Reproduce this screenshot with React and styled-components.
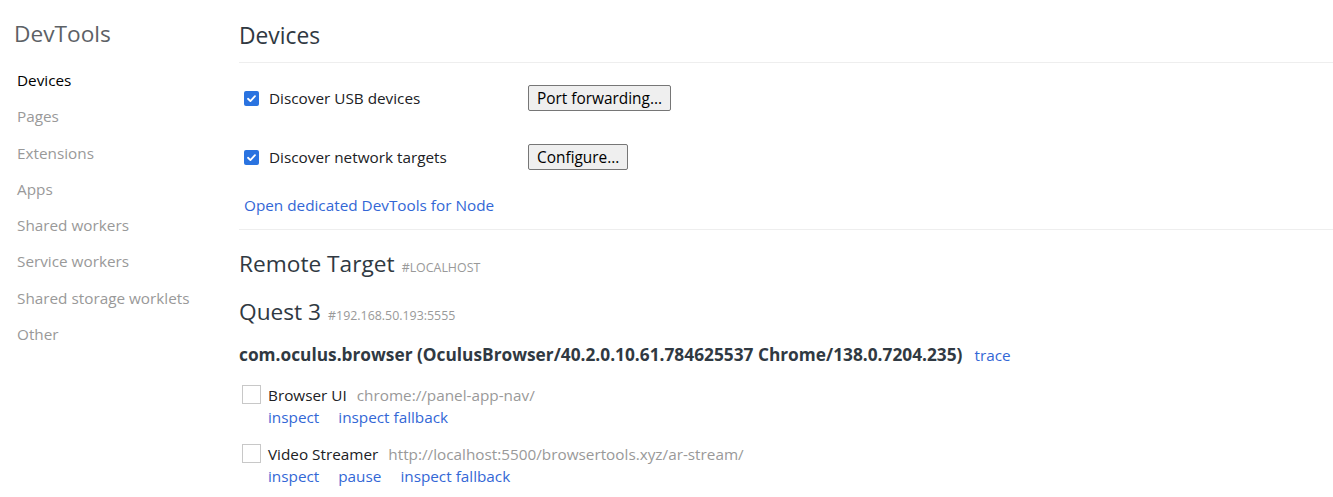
import React from "react";
import styled, { createGlobalStyle } from "styled-components";

const COLORS = {
  text: "#202124",
  heading: "#303942",
  title: "#5c6166",
  muted: "#999999",
  link: "#3367d6",
  rule: "#eeeeee",
  check: "#2a73e0",
};

const GlobalStyle = createGlobalStyle`
  html, body {
    margin: 0;
    padding: 0;
    background: #ffffff;
  }
  body {
    font-family: "Open Sans", "Noto Sans", sans-serif;
    font-size: 15.3px;
    color: ${COLORS.text};
  }
`;

const NAV = [
  "Devices",
  "Pages",
  "Extensions",
  "Apps",
  "Shared workers",
  "Service workers",
  "Shared storage worklets",
  "Other",
];

const Page = styled.div`
  display: flex;
  min-height: 497px;
`;

const Sidebar = styled.nav`
  width: 239px;
  flex: none;
  padding: 19px 0 0 14px;
  box-sizing: border-box;
`;

const SidebarTitle = styled.div`
  font-size: 22.7px;
  line-height: 30px;
  color: ${COLORS.title};
  margin-bottom: 21px;
`;

const NavItem = styled.div`
  height: 36.3px;
  line-height: 20px;
  padding-left: 3px;
  color: ${(p) => (p.$active ? "#000" : COLORS.muted)};
`;

const Main = styled.main`
  flex: 1;
  padding-top: 21px;
`;

const Header = styled.h1`
  margin: 0;
  font-size: 22.8px;
  font-weight: 400;
  line-height: 30px;
  color: ${COLORS.heading};
  padding-bottom: 11px;
  border-bottom: 1px solid ${COLORS.rule};
`;

const Settings = styled.div`
  padding: 22px 0 14px 5px;
  border-bottom: 1px solid ${COLORS.rule};
  display: flex;
  flex-direction: column;
  gap: 33px;
`;

const SettingRow = styled.div`
  display: flex;
  align-items: center;
  height: 26px;
`;

const CheckLabel = styled.label`
  display: flex;
  align-items: center;
  gap: 10px;
  width: 284px;
`;

const BlueBox = styled.span`
  width: 15px;
  height: 15px;
  border-radius: 2px;
  background: ${COLORS.check};
  display: flex;
  align-items: center;
  justify-content: center;
`;

const Button = styled.button`
  height: 26px;
  padding: 0 8px;
  font-family: inherit;
  font-size: 15.4px;
  color: #000;
  background: #efefef;
  border: 1px solid #767676;
  border-radius: 2px;
`;

const Link = styled.a`
  color: ${COLORS.link};
  text-decoration: none;
  cursor: pointer;
`;

const NodeLink = styled(Link)`
  display: block;
  line-height: 20px;
  margin-top: -8px;
`;

const Section = styled.section`
  padding-top: 19px;
`;

const SectionTitle = styled.h2`
  margin: 0 0 14px;
  font-size: 22.7px;
  font-weight: 400;
  line-height: 30px;
  color: ${COLORS.heading};
  display: flex;
  align-items: baseline;
  gap: 7px;
`;

const Tag = styled.span`
  font-size: 12.4px;
  color: ${COLORS.muted};
`;

const BrowserLine = styled.div`
  display: flex;
  align-items: baseline;
  gap: 12px;
  line-height: 20px;
  margin-top: 2px;
  margin-bottom: 20px;
`;

const BrowserName = styled.span`
  font-weight: 700;
  font-size: 17.3px;
  color: ${COLORS.heading};
`;

const TargetList = styled.div`
  display: flex;
  flex-direction: column;
  gap: 17px;
  padding-left: 3px;
`;

const Target = styled.div`
  display: grid;
  grid-template-columns: 19px 1fr;
  column-gap: 7px;
  align-items: start;
`;

const EmptyBox = styled.span`
  width: 19px;
  height: 19px;
  box-sizing: border-box;
  border: 1px solid #c8c8c8;
`;

const TargetTitle = styled.div`
  line-height: 20px;
  display: flex;
  gap: 10px;
`;

const Url = styled.span`
  color: ${COLORS.muted};
`;

const Actions = styled.div`
  grid-column: 2;
  display: flex;
  gap: 19px;
  line-height: 20px;
  margin-top: 2px;
`;

const Check = () => (
  <BlueBox>
    <svg width="11" height="11" viewBox="0 0 12 12">
      <path
        d="M2.2 6.3 L4.8 8.8 L9.8 3.4"
        fill="none"
        stroke="#fff"
        strokeWidth="2"
        strokeLinecap="round"
        strokeLinejoin="round"
      />
    </svg>
  </BlueBox>
);

const TARGETS = [
  {
    name: "Browser UI",
    url: "chrome://panel-app-nav/",
    actions: ["inspect", "inspect fallback"],
  },
  {
    name: "Video Streamer",
    url: "http://localhost:5500/browsertools.xyz/ar-stream/",
    actions: ["inspect", "pause", "inspect fallback"],
  },
];

export default function App() {
  return (
    <>
      <GlobalStyle />
      <Page>
        <Sidebar>
          <SidebarTitle>DevTools</SidebarTitle>
          {NAV.map((item, i) => (
            <NavItem key={item} $active={i === 0}>
              {item}
            </NavItem>
          ))}
        </Sidebar>
        <Main>
          <Header>Devices</Header>
          <Settings>
            <SettingRow>
              <CheckLabel>
                <Check />
                Discover USB devices
              </CheckLabel>
              <Button>Port forwarding...</Button>
            </SettingRow>
            <SettingRow>
              <CheckLabel>
                <Check />
                Discover network targets
              </CheckLabel>
              <Button>Configure...</Button>
            </SettingRow>
            <NodeLink>Open dedicated DevTools for Node</NodeLink>
          </Settings>
          <Section>
            <SectionTitle>
              Remote Target <Tag>#LOCALHOST</Tag>
            </SectionTitle>
            <SectionTitle>
              Quest 3 <Tag>#192.168.50.193:5555</Tag>
            </SectionTitle>
            <BrowserLine>
              <BrowserName>
                com.oculus.browser (OculusBrowser/40.2.0.10.61.784625537
                Chrome/138.0.7204.235)
              </BrowserName>
              <Link>trace</Link>
            </BrowserLine>
            <TargetList>
              {TARGETS.map((t) => (
                <Target key={t.name}>
                  <EmptyBox />
                  <TargetTitle>
                    <span>{t.name}</span>
                    <Url>{t.url}</Url>
                  </TargetTitle>
                  <Actions>
                    {t.actions.map((a) => (
                      <Link key={a}>{a}</Link>
                    ))}
                  </Actions>
                </Target>
              ))}
            </TargetList>
          </Section>
        </Main>
      </Page>
    </>
  );
}
